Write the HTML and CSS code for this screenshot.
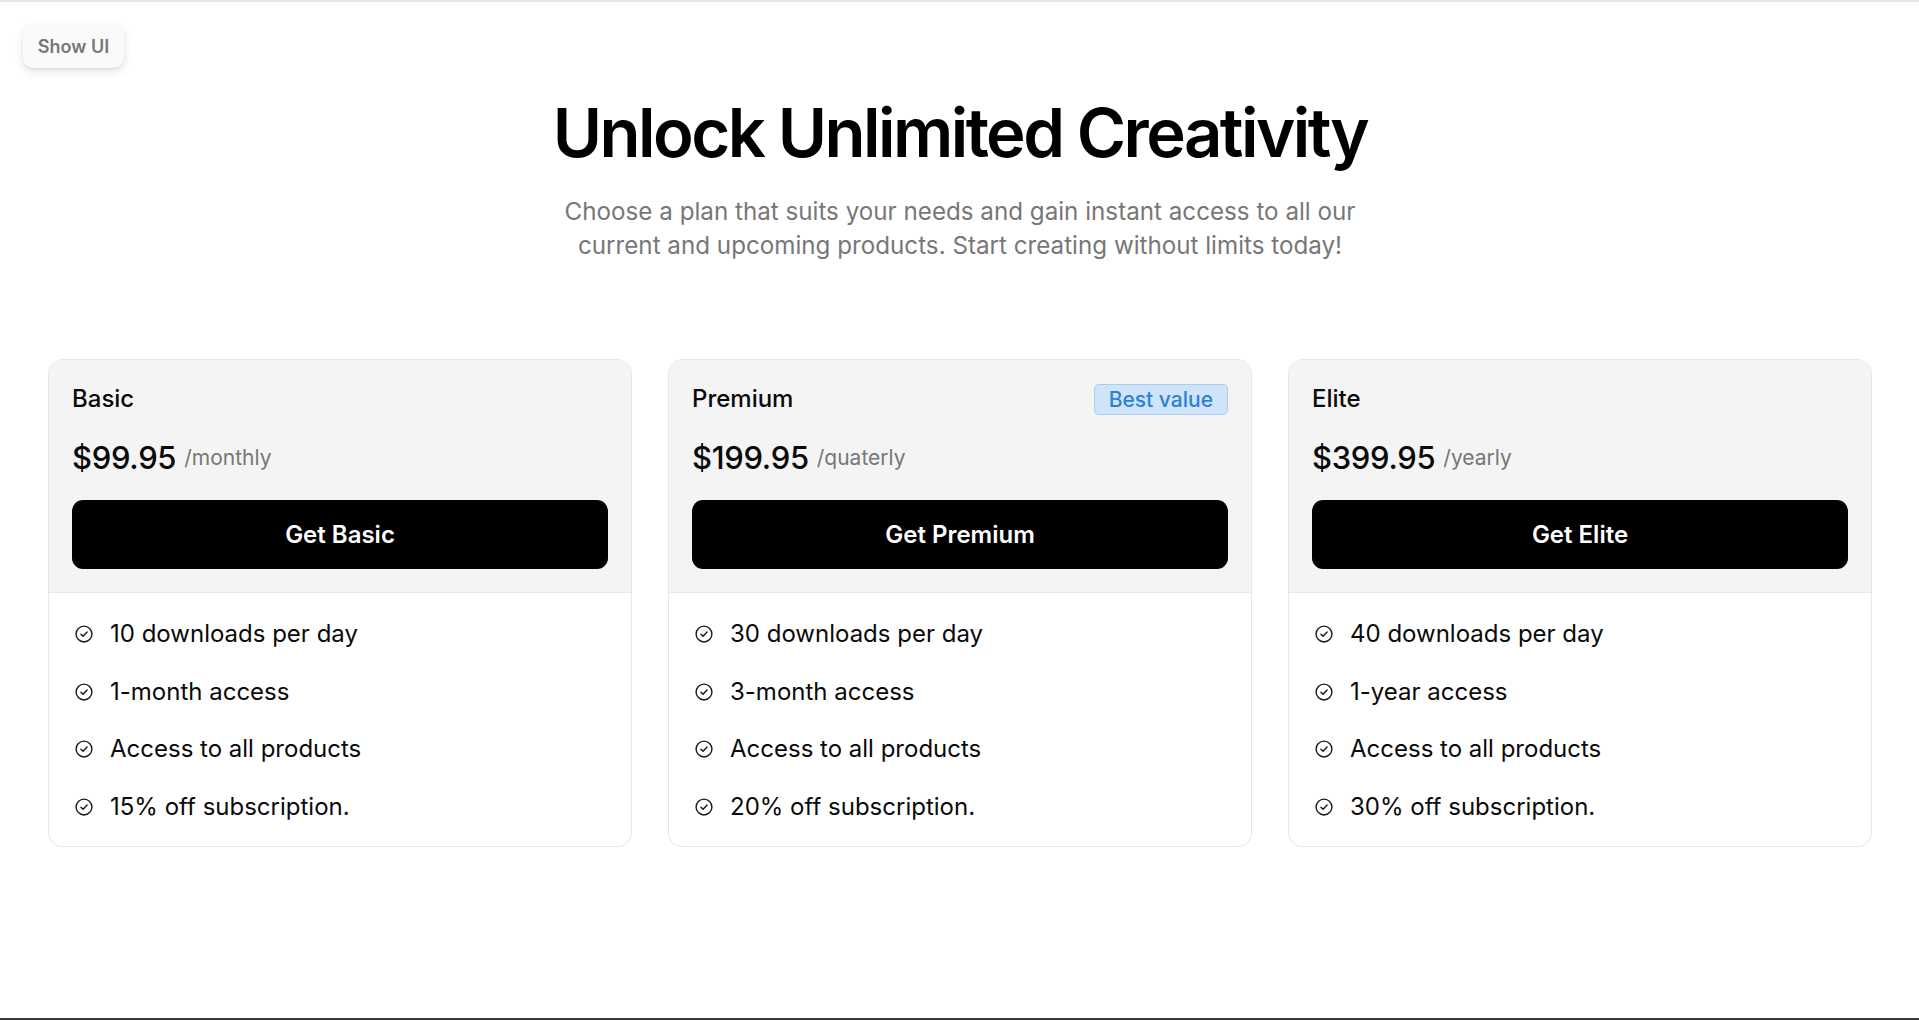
FILE: index.html
```html
<!DOCTYPE html>
<html lang="en">
<head>
<meta charset="utf-8">
<title>Pricing</title>
<link rel="stylesheet" href="styles.css">
</head>
<body>
<div class="topline"></div>
<button class="show-ui">Show UI</button>
<main class="page">
  <header class="hero">
    <h1 class="hero-title">Unlock Unlimited Creativity</h1>
    <p class="hero-sub">Choose a plan that suits your needs and gain instant access to all our current and upcoming products. Start creating without limits today!</p>
  </header>
  <section class="plans">
    <article class="plan">
      <div class="plan-head">
        <div class="plan-top"><h2 class="plan-name">Basic</h2></div>
        <div class="plan-price"><span class="amount">$99.95</span><span class="period">/monthly</span></div>
        <button class="plan-btn">Get Basic</button>
      </div>
      <ul class="features">
        <li class="feature"><svg class="check" viewBox="0 0 24 24"><circle cx="12" cy="12" r="9.5"/><path d="M8.3 12.3l2.6 2.5 4.8-5.2"/></svg><span>10 downloads per day</span></li>
        <li class="feature"><svg class="check" viewBox="0 0 24 24"><circle cx="12" cy="12" r="9.5"/><path d="M8.3 12.3l2.6 2.5 4.8-5.2"/></svg><span>1-month access</span></li>
        <li class="feature"><svg class="check" viewBox="0 0 24 24"><circle cx="12" cy="12" r="9.5"/><path d="M8.3 12.3l2.6 2.5 4.8-5.2"/></svg><span>Access to all products</span></li>
        <li class="feature"><svg class="check" viewBox="0 0 24 24"><circle cx="12" cy="12" r="9.5"/><path d="M8.3 12.3l2.6 2.5 4.8-5.2"/></svg><span>15% off subscription.</span></li>
      </ul>
    </article>
    <article class="plan">
      <div class="plan-head">
        <div class="plan-top"><h2 class="plan-name">Premium</h2><span class="badge">Best value</span></div>
        <div class="plan-price"><span class="amount">$199.95</span><span class="period">/quaterly</span></div>
        <button class="plan-btn">Get Premium</button>
      </div>
      <ul class="features">
        <li class="feature"><svg class="check" viewBox="0 0 24 24"><circle cx="12" cy="12" r="9.5"/><path d="M8.3 12.3l2.6 2.5 4.8-5.2"/></svg><span>30 downloads per day</span></li>
        <li class="feature"><svg class="check" viewBox="0 0 24 24"><circle cx="12" cy="12" r="9.5"/><path d="M8.3 12.3l2.6 2.5 4.8-5.2"/></svg><span>3-month access</span></li>
        <li class="feature"><svg class="check" viewBox="0 0 24 24"><circle cx="12" cy="12" r="9.5"/><path d="M8.3 12.3l2.6 2.5 4.8-5.2"/></svg><span>Access to all products</span></li>
        <li class="feature"><svg class="check" viewBox="0 0 24 24"><circle cx="12" cy="12" r="9.5"/><path d="M8.3 12.3l2.6 2.5 4.8-5.2"/></svg><span>20% off subscription.</span></li>
      </ul>
    </article>
    <article class="plan">
      <div class="plan-head">
        <div class="plan-top"><h2 class="plan-name">Elite</h2></div>
        <div class="plan-price"><span class="amount">$399.95</span><span class="period">/yearly</span></div>
        <button class="plan-btn">Get Elite</button>
      </div>
      <ul class="features">
        <li class="feature"><svg class="check" viewBox="0 0 24 24"><circle cx="12" cy="12" r="9.5"/><path d="M8.3 12.3l2.6 2.5 4.8-5.2"/></svg><span>40 downloads per day</span></li>
        <li class="feature"><svg class="check" viewBox="0 0 24 24"><circle cx="12" cy="12" r="9.5"/><path d="M8.3 12.3l2.6 2.5 4.8-5.2"/></svg><span>1-year access</span></li>
        <li class="feature"><svg class="check" viewBox="0 0 24 24"><circle cx="12" cy="12" r="9.5"/><path d="M8.3 12.3l2.6 2.5 4.8-5.2"/></svg><span>Access to all products</span></li>
        <li class="feature"><svg class="check" viewBox="0 0 24 24"><circle cx="12" cy="12" r="9.5"/><path d="M8.3 12.3l2.6 2.5 4.8-5.2"/></svg><span>30% off subscription.</span></li>
      </ul>
    </article>
  </section>
</main>
<div class="bottomline"></div>
</body>
</html>
```
FILE: styles.css
```css
* { box-sizing: border-box; }
html, body { margin: 0; padding: 0; background: #ffffff; }
body {
  font-family: Inter, "Noto Sans", "Liberation Sans", sans-serif;
  color: #0a0a0a;
  min-height: 1020px;
}
.topline {
  position: fixed; top: 0; left: 0; right: 0; height: 2px;
  background: #e6e6e6;
}
.bottomline {
  position: fixed; bottom: 0; left: 0; right: 0; height: 2px;
  background: #3a3a3a;
}
.show-ui {
  position: absolute; top: 25px; left: 23px;
  width: 101px; height: 43px;
  border: none; border-radius: 10px;
  background: #fafafa;
  box-shadow: 0 3px 10px rgba(0,0,0,0.12), 0 1px 2px rgba(0,0,0,0.06);
  font-family: Inter, "Liberation Sans", sans-serif;
  font-size: 18px; font-weight: 600; color: #777777;
  padding: 0;
}
.page {
  padding: 92px 47px 0 48px;
}
.hero {
  display: flex; flex-direction: column; align-items: center;
  text-align: center;
}
.hero-title {
  margin: 0;
  font-size: 67px; line-height: 82px; font-weight: 600;
  letter-spacing: -0.038em;
  color: #000;
}
.hero-sub {
  margin: 21px 0 0;
  max-width: 800px;
  font-size: 24.2px; line-height: 34px; font-weight: 400;
  color: #777777;
}
.plans {
  margin-top: 96px;
  display: grid;
  grid-template-columns: repeat(3, 1fr);
  gap: 36px;
}
.plan {
  border: 1px solid #e8e8e8;
  border-radius: 14px;
  overflow: hidden;
  background: #fff;
}
.plan-head {
  background: #f4f4f4;
  border-bottom: 1px solid #e8e8e8;
  padding: 24px 23px 23px 23px;
  display: flex; flex-direction: column;
}
.plan-top {
  display: flex; justify-content: space-between; align-items: center;
  height: 30px;
}
.plan-name {
  margin: 0;
  font-size: 24px; line-height: 30px; font-weight: 500;
  color: #0a0a0a;
}
.badge {
  height: 31px; line-height: 29px;
  padding: 0 14px;
  border: 1px solid #a8cdef;
  border-radius: 5px;
  background: #cfe4f8;
  color: #2b82d6;
  font-size: 21px; font-weight: 500;
}
.plan-price {
  margin-top: 24px;
  display: flex; align-items: center; gap: 8px;
  line-height: 40px;
}
.amount {
  font-size: 31px; font-weight: 500; color: #0a0a0a;
  letter-spacing: -0.01em;
}
.period {
  font-size: 21px; color: #777777;
}
.plan-btn {
  margin-top: 22px;
  height: 69px;
  border: none; border-radius: 11px;
  background: #000; color: #fff;
  font-family: Inter, "Liberation Sans", sans-serif;
  font-size: 24px; font-weight: 600;
}
.features {
  list-style: none; margin: 0;
  padding: 24px 23px 22px 25px;
  display: flex; flex-direction: column; gap: 23.5px;
}
.feature {
  display: flex; align-items: center; gap: 16px;
  font-size: 24px; line-height: 34px; color: #0a0a0a;
}
.check {
  width: 20px; height: 20px; flex: none;
  fill: none; stroke: #1a1a1a; stroke-width: 1.7;
  stroke-linecap: round; stroke-linejoin: round;
}
```
